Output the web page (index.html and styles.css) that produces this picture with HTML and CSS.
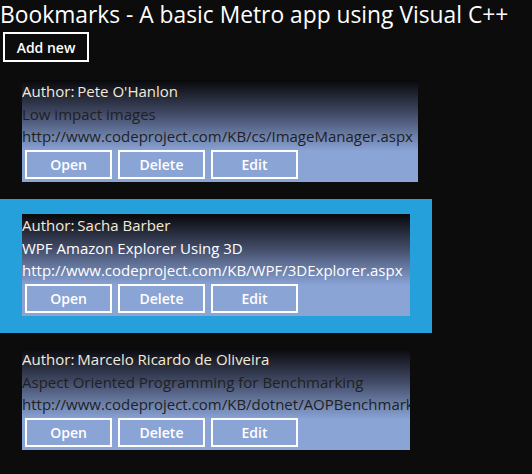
FILE: index.html
```html
<!DOCTYPE html>
<html>
<head>
    <title>Bookmarks</title>
    <link rel="stylesheet" href="styles.css">
</head>
<body>

<h1 class="page-title">Bookmarks - A basic Metro app using Visual C++</h1>
<button class="add-btn">Add new</button>

<div class="bookmarks">
    <div class="bookmark-item">
        <div class="bookmark-card wide">
            <div class="author"><span>Author:</span>Pete O'Hanlon</div>
            <div class="line">Low impact images</div>
            <div class="line">http://www.codeproject.com/KB/cs/ImageManager.aspx</div>
            <div class="actions">
                <button class="card-btn">Open</button>
                <button class="card-btn">Delete</button>
                <button class="card-btn">Edit</button>
            </div>
        </div>
    </div>
    <div class="bookmark-item selected">
        <div class="bookmark-card">
            <div class="author"><span>Author:</span>Sacha Barber</div>
            <div class="line">WPF Amazon Explorer Using 3D</div>
            <div class="line">http://www.codeproject.com/KB/WPF/3DExplorer.aspx</div>
            <div class="actions">
                <button class="card-btn">Open</button>
                <button class="card-btn">Delete</button>
                <button class="card-btn">Edit</button>
            </div>
        </div>
    </div>
    <div class="bookmark-item">
        <div class="bookmark-card">
            <div class="author"><span>Author:</span>Marcelo Ricardo de Oliveira</div>
            <div class="line">Aspect Oriented Programming for Benchmarking</div>
            <div class="line">http://www.codeproject.com/KB/dotnet/AOPBenchmarking.aspx</div>
            <div class="actions">
                <button class="card-btn">Open</button>
                <button class="card-btn">Delete</button>
                <button class="card-btn">Edit</button>
            </div>
        </div>
    </div>
</div>

</body>
</html>
```

FILE: styles.css
```css
body {
    margin: 0;
    background: #0c0c0c;
    font-family: "Open Sans", "Noto Sans", sans-serif;
    overflow: hidden;
}

.page-title {
    margin: 0 0 2px 0;
    font-size: 22.8px;
    font-weight: 400;
    line-height: 30px;
    color: white;
    white-space: nowrap;
}

.add-btn {
    display: block;
    margin-left: 3px;
    width: 86px;
    height: 30px;
    padding: 0;
    background: transparent;
    border: 2px solid white;
    color: white;
    font-family: inherit;
    font-size: 14px;
    font-weight: 600;
}

.bookmarks {
    margin-top: 3px;
    width: 432px;
}

.bookmark-item {
    height: 134px;
    box-sizing: border-box;
    padding: 15px 0 17px 22px;
}
.bookmark-item.selected {
    background: #25a0da;
}

.bookmark-card {
    width: 388px;
    height: 102px;
    overflow: hidden;
    white-space: nowrap;
    background: linear-gradient(to bottom, #08080a 0%, #414a66 33%, #8aa4d6 70%, #8aa4d6 100%);
    font-size: 15px;
    line-height: 22.5px;
    color: #1f1f22;
}
.bookmark-card.wide {
    width: 396px;
}
.selected .bookmark-card {
    color: white;
}

.author {
    color: #f5ead8;
}
.author span {
    margin-right: 3px;
}

.actions {
    display: flex;
    gap: 6px;
    margin: 2px 0 0 3px;
}

.card-btn {
    width: 87px;
    height: 29px;
    padding: 0;
    background: transparent;
    border: 2px solid white;
    color: white;
    font-family: inherit;
    font-size: 14px;
    font-weight: 600;
}
```
